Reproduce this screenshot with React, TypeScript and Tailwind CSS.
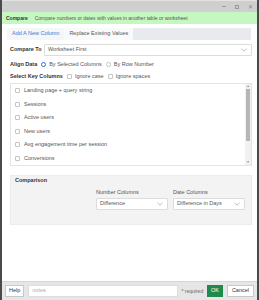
import React from "react";

const keyColumns = [
  "Landing page + query string",
  "Sessions",
  "Active users",
  "New users",
  "Avg engagement time per session",
  "Conversions",
];

function Chevron() {
  return (
    <svg width="6" height="4" viewBox="0 0 6 4" className="shrink-0">
      <path d="M0.5 0.8 L3 3.2 L5.5 0.8" fill="none" stroke="#9aa0a6" strokeWidth="0.7" />
    </svg>
  );
}

function Select({ value, className }: { value: string; className: string }) {
  return (
    <div className={`flex items-center justify-between h-[12px] border border-[#dcdcdc] bg-white rounded-[1px] pl-[3px] pr-[4px] text-[#555] ${className}`}>
      <span>{value}</span>
      <Chevron />
    </div>
  );
}

function Box() {
  return <span className="inline-block w-[5px] h-[5px] border border-[#c4c4c4] rounded-[1px] bg-white shrink-0" />;
}

export default function App() {
  return (
    <div className="w-[259px] h-[300px] bg-[#4a4a4a] pl-[2px] pr-[2px] overflow-hidden" style={{ fontFamily: "'Liberation Sans', Arial, sans-serif" }}>
      <div className="flex flex-col h-full bg-white text-[5.5px] leading-none text-[#333] whitespace-nowrap">
        {/* title bar */}
        <div className="h-[12px] bg-[#cfcfcf] border-t border-[#e2e2e2] flex items-center justify-end pr-[4px] gap-[9px] text-[#8a8a8a]">
          <span className="w-[4px] h-px bg-[#9a9a9a]" />
          <span className="w-[4px] h-[4px] border border-[#9a9a9a]" />
          <span className="text-[6px] leading-none">✕</span>
        </div>

        {/* banner */}
        <div className="h-[12px] bg-[#c5f7c0] flex items-center px-[4px] gap-[7px] text-[5px]">
          <span className="font-bold text-[#333]">Compare</span>
          <span className="text-[#555]">Compare numbers or dates with values in another table or worksheet</span>
        </div>

        <div className="flex flex-col px-[5px] pt-[4px]">
          {/* tabs */}
          <div className="flex h-[12px] bg-[#e8eaed] mr-[1px]">
            <div className="px-[5px] flex items-center bg-[#f4f6f8] text-[#3a7bd5]">Add A New Column</div>
            <div className="px-[5px] flex items-center bg-[#fafafa] text-[#555]">Replace Existing Values</div>
          </div>

          {/* compare to */}
          <div className="flex items-center mt-[4px] pl-[3px]">
            <span className="font-bold w-[34px]">Compare To</span>
            <Select value="Worksheet First" className="flex-1" />
          </div>

          {/* align */}
          <div className="flex items-center mt-[4px] pl-[3px] h-[9px]">
            <span className="font-bold mr-[4px]">Align Data</span>
            <span className="w-[5px] h-[5px] rounded-full border-[1.5px] border-[#2f6fe0] mr-[3px]" />
            <span className="text-[#555] mr-[4px]">By Selected Columns</span>
            <span className="w-[5px] h-[5px] rounded-full border border-[#c4c4c4] mr-[3px]" />
            <span className="text-[#555]">By Row Number</span>
          </div>

          {/* key columns */}
          <div className="flex items-center mt-[3px] pl-[3px] h-[9px]">
            <span className="font-bold mr-[4px]">Select Key Columns</span>
            <Box />
            <span className="text-[#555] ml-[3px] mr-[4px]">Ignore case</span>
            <Box />
            <span className="text-[#555] ml-[3px]">Ignore spaces</span>
          </div>

          {/* list */}
          <div className="flex mt-[2px] ml-[3px] h-[83px] border border-[#e4e4e4]">
            <div className="flex-1 flex flex-col pt-[4px] pl-[4px] gap-[8px]">
              {keyColumns.map((c) => (
                <div key={c} className="flex items-center gap-[4px] text-[#555]">
                  <Box />
                  <span>{c}</span>
                </div>
              ))}
            </div>
            <div className="w-[6px] flex flex-col items-center bg-[#f1f1f1] py-[1px]">
              <span className="text-[3px] text-[#777]">▲</span>
              <div className="w-[4px] h-[52px] bg-[#b6b6b6] mt-[1px]" />
              <div className="flex-1" />
              <span className="text-[3px] text-[#777]">▼</span>
            </div>
          </div>

          {/* comparison */}
          <div className="mt-[9px] ml-[3px] h-[50px] bg-[#f3f3f3] border border-[#ececec] px-[4px] pt-[2px]">
            <div className="font-bold text-[#333]">Comparison</div>
            <div className="flex mt-[6px] ml-[81px] gap-[5px]">
              <div className="flex flex-col w-[72px]">
                <span className="text-[#555]">Number Columns</span>
                <Select value="Difference" className="mt-[3px]" />
              </div>
              <div className="flex flex-col w-[72px]">
                <span className="text-[#555]">Date Columns</span>
                <Select value="Difference in Days" className="mt-[3px]" />
              </div>
            </div>
          </div>
        </div>

        <div className="flex-1" />

        {/* footer */}
        <div className="h-[19px] bg-[#e6e6e6] border-t border-[#d6d6d6] flex items-center px-[3px] gap-[4px]">
          <div className="h-[12px] px-[3px] flex items-center bg-white border border-[#c8c8c8]">Help</div>
          <div className="h-[12px] w-[152px] flex items-center px-[3px] bg-white border border-[#dedede] text-[#aaa]">notes</div>
          <span className="text-[#666] text-[5px]">* required</span>
          <div className="h-[12px] w-[16px] flex items-center justify-center bg-[#1f8a4c] text-white">OK</div>
          <div className="h-[12px] px-[4px] flex items-center bg-white border border-[#c8c8c8]">Cancel</div>
        </div>
      </div>
    </div>
  );
}
